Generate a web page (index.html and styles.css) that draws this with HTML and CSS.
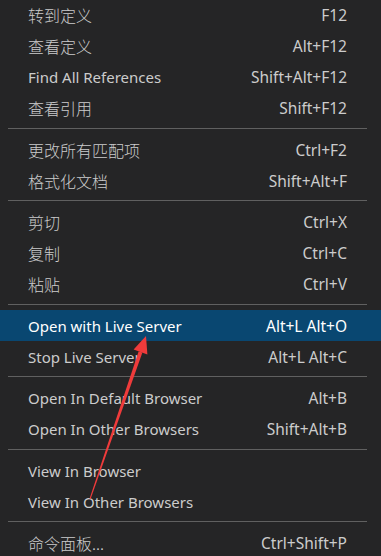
FILE: index.html
```html
<!DOCTYPE html>
<html lang="zh-CN">
<head>
<meta charset="utf-8">
<link rel="stylesheet" href="styles.css">
</head>
<body>
<div class="menu">
  <div class="item"><span class="label cjk">转到定义</span><span class="key">F12</span></div>
  <div class="item"><span class="label cjk">查看定义</span><span class="key">Alt+F12</span></div>
  <div class="item"><span class="label">Find All References</span><span class="key">Shift+Alt+F12</span></div>
  <div class="item"><span class="label cjk">查看引用</span><span class="key">Shift+F12</span></div>
  <div class="sep"></div>
  <div class="item"><span class="label cjk">更改所有匹配项</span><span class="key">Ctrl+F2</span></div>
  <div class="item"><span class="label cjk">格式化文档</span><span class="key">Shift+Alt+F</span></div>
  <div class="sep"></div>
  <div class="item"><span class="label cjk">剪切</span><span class="key">Ctrl+X</span></div>
  <div class="item"><span class="label cjk">复制</span><span class="key">Ctrl+C</span></div>
  <div class="item"><span class="label cjk">粘贴</span><span class="key">Ctrl+V</span></div>
  <div class="sep"></div>
  <div class="item active"><span class="label">Open with Live Server</span><span class="key">Alt+L Alt+O</span></div>
  <div class="item"><span class="label">Stop Live Server</span><span class="key">Alt+L Alt+C</span></div>
  <div class="sep"></div>
  <div class="item"><span class="label">Open In Default Browser</span><span class="key">Alt+B</span></div>
  <div class="item"><span class="label">Open In Other Browsers</span><span class="key">Shift+Alt+B</span></div>
  <div class="sep"></div>
  <div class="item"><span class="label">View In Browser</span><span class="key"></span></div>
  <div class="item"><span class="label">View In Other Browsers</span><span class="key"></span></div>
  <div class="sep"></div>
  <div class="item"><span class="label cjk">命令面板...</span><span class="key">Ctrl+Shift+P</span></div>
</div>
<svg class="arrow" width="381" height="556" viewBox="0 0 381 556">
  <polygon points="89.5,498.8 90.5,499.2 142.4,352.6 138.6,351.4" fill="#ef3b3b"/>
  <polygon points="146,336 147.4,354.6 133.6,349.6" fill="#ef3b3b"/>
</svg>
</body>
</html>
```
FILE: styles.css
```css
html, body {
  margin: 0;
  padding: 0;
  background: #252526;
}
body {
  width: 381px;
  height: 556px;
  overflow: hidden;
  position: relative;
  font-family: "Noto Sans", "Noto Sans CJK SC", sans-serif;
  font-size: 15px;
  color: #cccccc;
}
.menu {
  display: flex;
  flex-direction: column;
  margin-top: -0.5px;
}
.item {
  display: flex;
  align-items: center;
  justify-content: space-between;
  height: 31px;
  padding: 0 34px 0 28px;
  white-space: nowrap;
}
.item.active {
  background: #094771;
  color: #ffffff;
}
.key {
  font-size: 15.5px;
}
.cjk {
  font-family: "Noto Sans CJK SC", sans-serif;
  font-size: 16px;
  font-weight: 300;
}
.sep {
  height: 1px;
  background: #606060;
  margin: 4px 14px 5.5px 8px;
}
.arrow {
  position: absolute;
  left: 0;
  top: 0;
  pointer-events: none;
}
```
